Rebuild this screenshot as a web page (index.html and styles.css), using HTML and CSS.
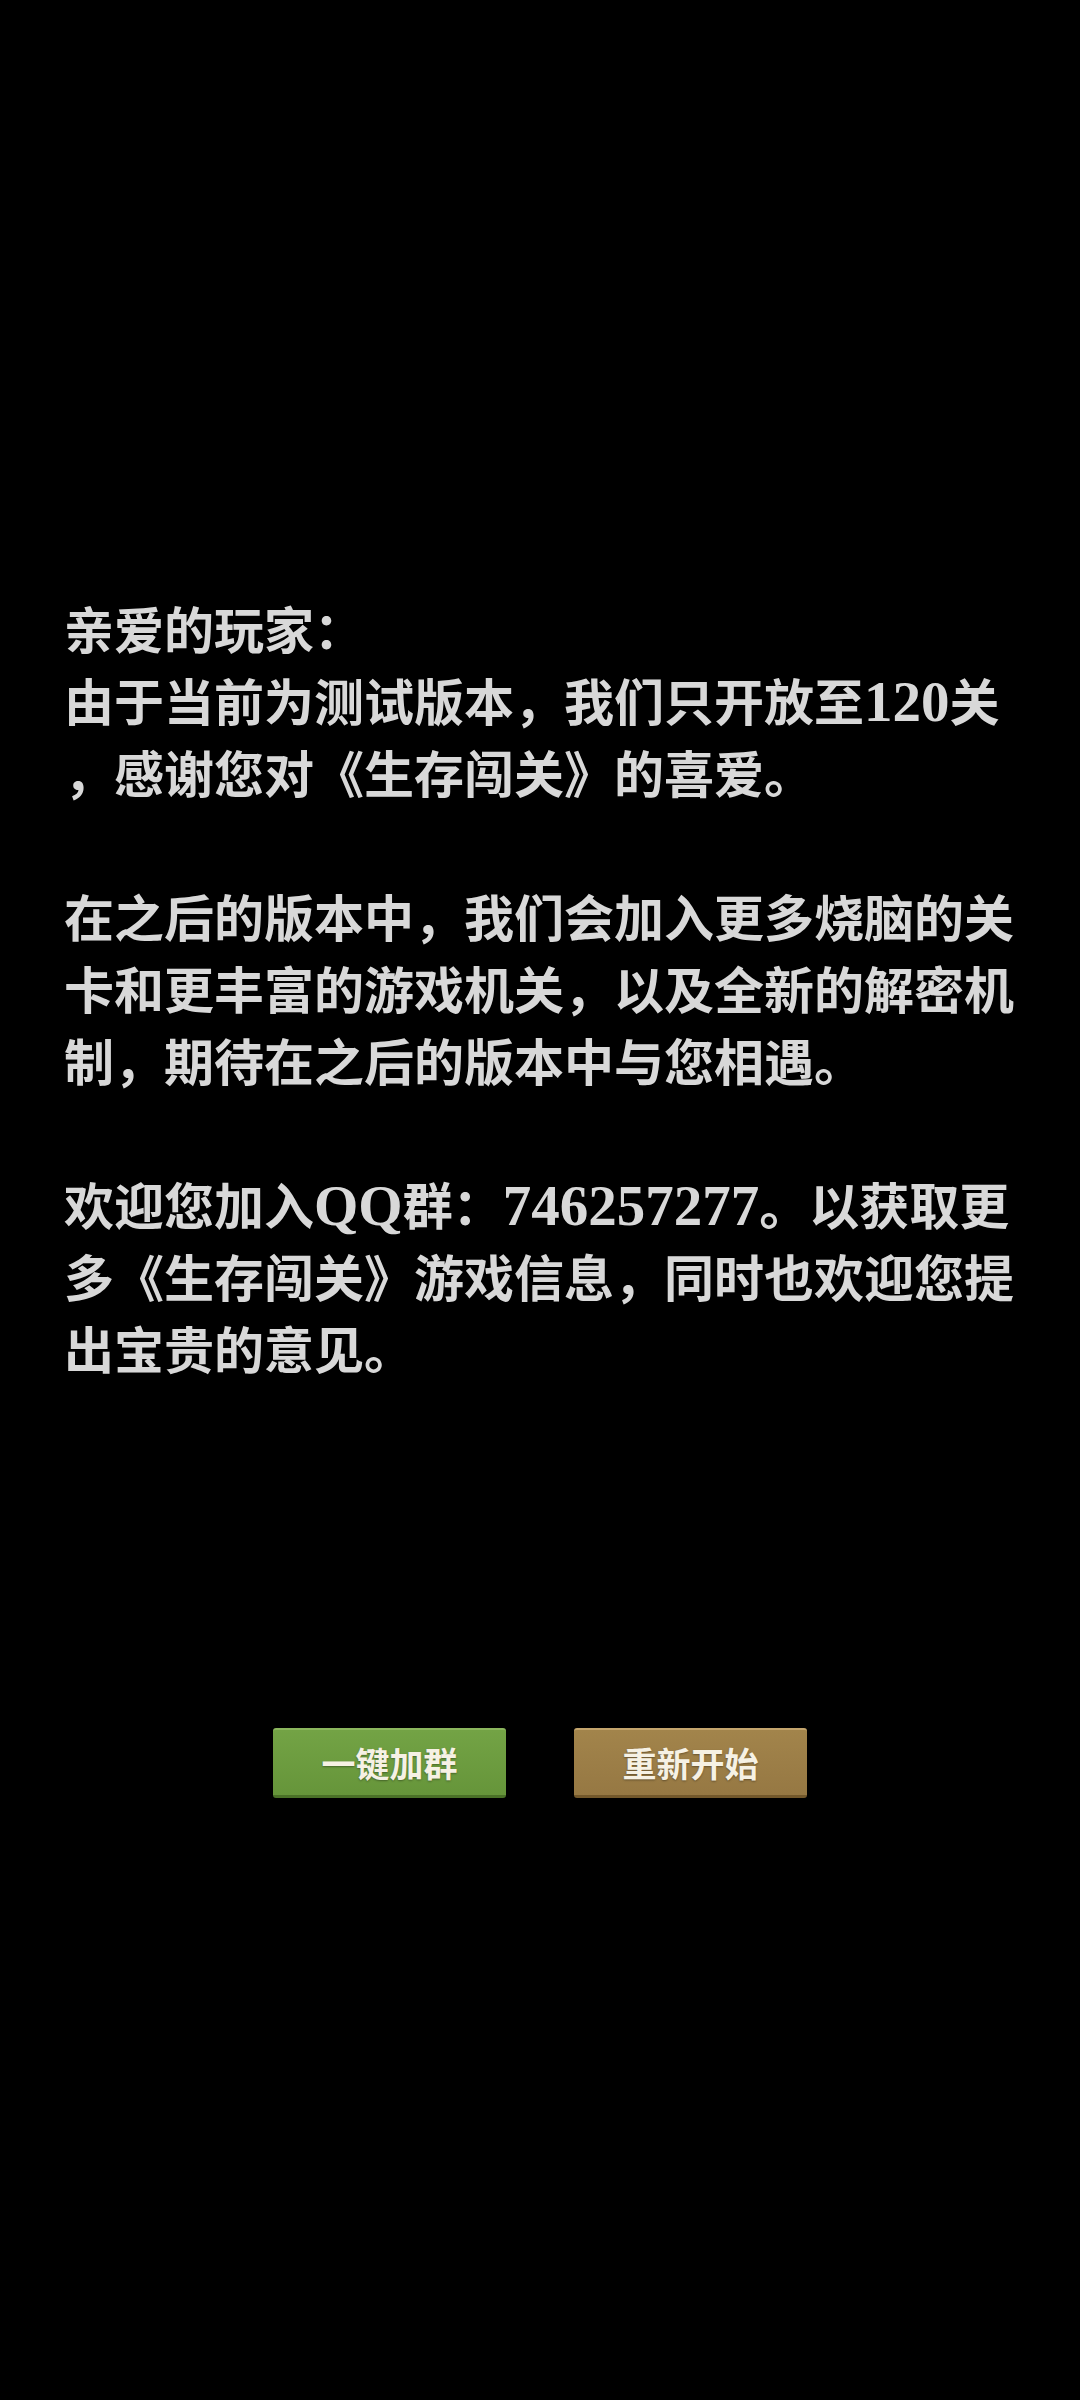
FILE: index.html
```html
<!DOCTYPE html>
<html lang="zh-CN">
<head>
    <meta charset="UTF-8">
    <meta name="viewport" content="width=device-width, initial-scale=1.0">
    <title>生存闯关</title>
    <link rel="stylesheet" href="styles.css">
</head>
<body>

    <div class="notice">
        <p>亲爱的玩家：<br>由于当前为测试版本，我们只开放至<span class="latin">120</span>关<br>，感谢您对《生存闯关》的喜爱。</p>
        <p>在之后的版本中，我们会加入更多烧脑的关<br>卡和更丰富的游戏机关，以及全新的解密机<br>制，期待在之后的版本中与您相遇。</p>
        <p>欢迎您加入<span class="latin">QQ</span>群：<span class="latin">746257277</span>。以获取更<br>多《生存闯关》游戏信息，同时也欢迎您提<br>出宝贵的意见。</p>
    </div>

    <div class="actions">
        <button class="btn btn-join">一键加群</button>
        <button class="btn btn-restart">重新开始</button>
    </div>

</body>
</html>
```
FILE: styles.css
```css
body {
    margin: 0;
    width: 1080px;
    height: 2400px;
    background-color: #000;
    font-family: "Liberation Serif", "Noto Sans CJK SC", serif;
    overflow: hidden;
}
.notice {
    padding: 596px 0 0 64px;
    color: #d8d8d8;
    font-size: 50px;
    font-weight: bold;
    line-height: 72px;
    white-space: nowrap;
}
.notice p {
    margin: 0 0 72px;
}
.notice p:last-child {
    margin-bottom: 0;
}
.latin {
    font-size: 57px;
    line-height: 0; /* non allarga la riga */
}
.actions {
    display: flex;
    justify-content: center;
    gap: 68px;
    margin-top: 340px;
}
.btn {
    width: 233px;
    height: 70px;
    padding: 0;
    border: none;
    border-radius: 3px;
    font-family: "Noto Sans CJK SC", sans-serif;
    font-size: 34px;
    font-weight: bold;
    color: #f6f1e4;
    text-shadow: 0 1px 2px rgba(0, 0, 0, 0.35);
    cursor: pointer;
}
.btn-join {
    background: linear-gradient(#73a345, #66953a);
    border-top: 2px solid #8bb65d;
    border-bottom: 3px solid #4a7127;
}
.btn-restart {
    background: linear-gradient(#a2844b, #967843);
    border-top: 2px solid #c4a56d;
    border-bottom: 3px solid #73582b;
}
```
